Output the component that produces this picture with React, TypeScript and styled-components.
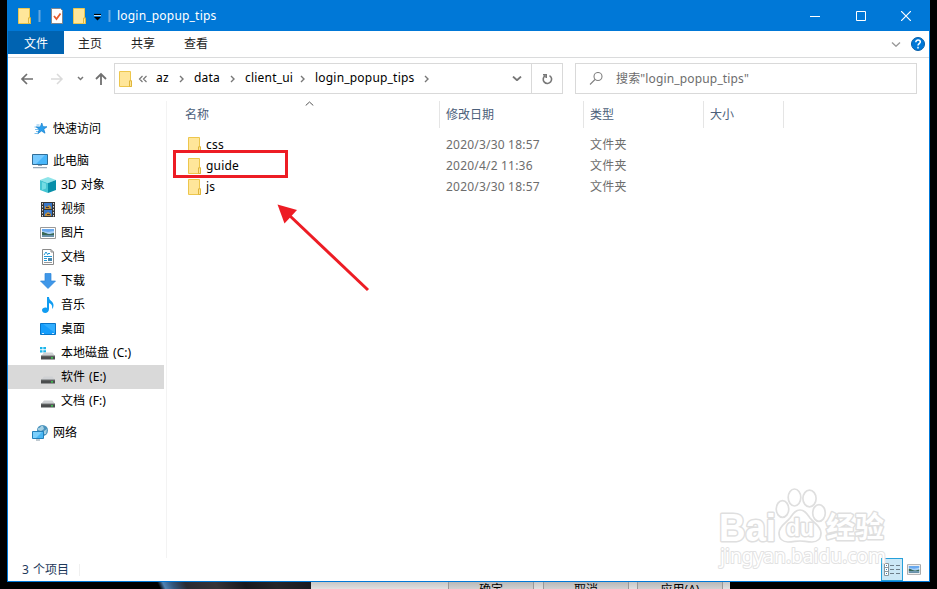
import React from "react";
import styled, { createGlobalStyle } from "styled-components";

const GlobalStyle = createGlobalStyle`
  * { box-sizing: border-box; }
  html, body { margin: 0; padding: 0; background: #000; overflow: hidden; }
  body { font-family: "Noto Sans", "Noto Sans CJK SC", sans-serif; font-size: 12px; line-height: 16px; color: #000; }
  svg { display: block; flex: none; }
`;

const Screen = styled.div`
  position: relative;
  width: 937px;
  height: 589px;
  overflow: hidden;
  display: flex;
  flex-direction: column;
  background: #000;
`;

const Window = styled.main`
  width: 923px;
  height: 582px;
  flex: none;
  margin-left: 7px;
  background: #fff;
  border: 1px solid #0078d7;
  border-top: 0;
  display: flex;
  flex-direction: column;
`;

const TitleBar = styled.header`
  height: 31px;
  background: #0078d7;
  color: #fff;
  display: flex;
  align-items: center;
`;

const QuickTools = styled.div`
  width: 109px;
  display: flex;
  align-items: center;
  padding-left: 10px;
`;

const Title = styled.h1`
  margin: 0;
  font-size: 12px;
  font-weight: 400;
  letter-spacing: 0.2px;
  flex: 1;
`;

const WindowButton = styled.button`
  width: 45.5px;
  height: 30px;
  border: 0;
  padding: 0;
  background: transparent;
  display: flex;
  align-items: center;
  justify-content: center;
`;

const WindowButtons = styled.div`
  display: flex;
`;

const Ribbon = styled.nav`
  height: 27px;
  border-bottom: 1px solid #dadbdc;
  display: flex;
  align-items: flex-start;
`;

const RibbonTab = styled.a<{ $file?: boolean }>`
  width: ${(p) => (p.$file ? 56 : 53)}px;
  height: 23px;
  line-height: 25px;
  text-align: center;
  background: ${(p) => (p.$file ? "#0063b1" : "transparent")};
  color: ${(p) => (p.$file ? "#fff" : "#222")};
  padding-right: ${(p) => (p.$file ? 0 : 1)}px;
`;

const RibbonEnd = styled.div`
  margin-left: auto;
  height: 26px;
  display: flex;
  align-items: center;
  gap: 10px;
  padding-right: 4px;
`;

const AddressRow = styled.div`
  height: 43px;
  padding-top: 5px;
  display: flex;
`;

const NavButtons = styled.div`
  width: 106px;
  height: 31px;
  padding-left: 12px;
`;

const AddressBox = styled.div`
  width: 449px;
  height: 31px;
  border: 1px solid #d9d9d9;
  display: flex;
  align-items: center;
  padding-left: 4px;
`;

const Crumb = styled.span<{ $width: number }>`
  width: ${(p) => p.$width}px;
  padding-bottom: 1px;
  letter-spacing: 0.2px;
  white-space: nowrap;
`;

const ChevronSlot = styled.span<{ $width: number }>`
  width: ${(p) => p.$width}px;
`;

const AddressEnd = styled.div`
  margin-left: auto;
  height: 29px;
  display: flex;
  align-items: center;
`;

const Refresh = styled.div`
  width: 31px;
  height: 29px;
  margin-left: 9px;
  border-left: 1px solid #d9d9d9;
  display: flex;
  align-items: center;
  justify-content: center;
`;

const SearchBox = styled.div`
  width: 342px;
  height: 31px;
  margin-left: 12px;
  border: 1px solid #d9d9d9;
  padding-left: 13px;
  display: flex;
  align-items: center;
  gap: 13px;
  color: #6d6d6d;
  letter-spacing: 0.15px;
`;

const Body = styled.div`
  height: 457px;
  display: flex;
`;

const Sidebar = styled.aside`
  width: 159px;
  padding: 16px 2px 0 0;
  border-right: 1px solid #f3f3f3;
`;

const TreeItem = styled.div<{ $child?: boolean; $selected?: boolean; $gap?: boolean }>`
  height: 24px;
  margin-top: ${(p) => (p.$gap ? 8 : 0)}px;
  padding-left: ${(p) => (p.$child ? 32 : 24)}px;
  display: flex;
  align-items: center;
  gap: 5px;
  white-space: nowrap;
  word-spacing: 1px;
  background: ${(p) => (p.$selected ? "#d9d9d9" : "transparent")};
`;

const Files = styled.section`
  flex: 1;
  min-width: 0;
`;

const SortMark = styled.div`
  height: 0;
  padding-left: 138px;
`;

const HeaderRow = styled.div`
  display: grid;
  grid-template-columns: 273px 144px 120px 80px;
  height: 27px;
  color: #4c607a;
`;

const HeaderCell = styled.div<{ $first?: boolean }>`
  padding-left: ${(p) => (p.$first ? 18 : 6)}px;
  border-right: 1px solid #e5e5e5;
  line-height: 27px;
`;

const FileRow = styled.div`
  display: grid;
  grid-template-columns: 273px 144px 120px;
  height: 21px;
  line-height: 21px;
  color: #6d6d6d;
`;

const FileList = styled.div`
  padding-top: 6px;
`;

const FileName = styled.div`
  display: flex;
  align-items: center;
  gap: 4px;
  padding-left: 21px;
  color: #000;
  letter-spacing: 0.2px;
`;

const FileCell = styled.div`
  padding-left: 6px;
  letter-spacing: 0.2px;
`;

const StatusBar = styled.footer`
  flex: 1;
  display: flex;
  align-items: center;
  padding-left: 14px;
  color: #1e395b;
`;

const StatusText = styled.span`
  width: 58px;
  height: 12px;
  line-height: 12px;
  word-spacing: 1px;
  border-right: 1px solid #f0f0f0;
`;

const ViewButtons = styled.div`
  margin-left: auto;
  display: flex;
  align-items: center;
  padding-right: 4px;
`;

const ViewButton = styled.div<{ $active?: boolean }>`
  width: 22px;
  height: 23px;
  border: ${(p) => (p.$active ? "1px solid #26a0da" : "0")};
  background: ${(p) => (p.$active ? "#cce8f6" : "transparent")};
  display: flex;
  align-items: center;
  justify-content: center;
`;

const Backdrop = styled.div`
  height: 7px;
  display: flex;
`;

const Wallpaper = styled.div`
  width: 154px;
  margin-left: 157px;
  background: linear-gradient(65deg, #000 0, #000 3px, #4f83b4 8px, #32567c 16px, #292b33 28px, #353338 55px, #18181e 82px, #25252a 110px, #15151c 154px);
`;

const Dialog = styled.div`
  width: 419px;
  display: flex;
  padding-left: 137px;
  overflow: hidden;
  background: linear-gradient(#c6c6c6, #e0e0e0);
`;

const DialogButton = styled.div<{ $gap: number }>`
  width: 86px;
  height: 24px;
  margin-right: ${(p) => p.$gap}px;
  flex: none;
  border: 1px solid #989898;
  border-top: 0;
  background: linear-gradient(#b8b8b8, #d0d0d0 7px);
  text-align: center;
  line-height: 15px;
`;

const HighlightBox = styled.div`
  position: absolute;
  left: 173px;
  top: 150px;
  width: 115px;
  height: 28px;
  border: 3px solid #ed1c24;
`;

const Overlay = styled.svg`
  position: absolute;
  left: 0;
  top: 0;
  pointer-events: none;
`;

const Folder = () => (
  <svg width="14" height="16" viewBox="0 0 14 16">
    <path d="M.5.5h11v9.500h1v5.500H.5z" fill="#ffe69a" stroke="#edc64c" />
    <path d="M10.500 15.500V9.800h2v5.700z" fill="#ffe595" stroke="#dfb63c" />
  </svg>
);

const Chevron = ({ down, size = 5, color = "#777", w = 1.4 }: { down?: boolean; size?: number; color?: string; w?: number }) => (
  <svg width={down ? size * 2 : size} height={down ? size : size * 1.6} viewBox={down ? "0 0 10 5" : "0 0 5 8"} fill="none" stroke={color} strokeWidth={w}>
    <path d={down ? "M1 .6 5 4.200 9 .6" : "M1 1 4 4 1 7"} />
  </svg>
);

const Picture = ({ w = 16, h = 12 }: { w?: number; h?: number }) => (
  <svg width={w} height={h} viewBox="0 0 16 12">
    <path d="M.5.5h15v11H.5z" fill="#fff" stroke="#999" />
    <path d="M2 2h12v8H2z" fill="#a9d0f7" />
    <path d="M2 2h12v2L8 5 2 4z" fill="#6aa9ee" />
    <path d="M2 5c3 0 4 2 8 2l4-1v2H2z" fill="#396856" />
    <path d="M2 8h12v2H2z" fill="#6790a8" />
  </svg>
);

const Drive = ({ win }: { win?: boolean }) => (
  <svg width="16" height="16" viewBox="0 0 16 16">
    {win && <path d="M0 2h2.500v2.300H0zM3.300 2H6v2.300H3.300zM0 5.200h2.500v2.300H0zM3.300 5.200H6v2.300H3.300z" fill="#1bb5ea" />}
    <path d="m4 7.500h8.500l2 3h-13z" fill="#cfd1d4" />
    <path d="M1 11h14v3.500H1z" fill="#4b4d4e" />
    <path d="M1 10.300h14v1H1z" fill="#85888a" />
    <path d="M11 12.300h2v1.300h-2z" fill="#3cdf50" />
  </svg>
);

type IconName = "star" | "pc" | "cube" | "film" | "picture" | "doc" | "down" | "music" | "desktop" | "driveWin" | "drive" | "network";

const TreeIcon = ({ name }: { name: IconName }) => {
  if (name === "driveWin") return <Drive win />;
  if (name === "drive") return <Drive />;
  if (name === "picture") return <Picture />;
  return (
    <svg width="16" height="16" viewBox="0 0 16 16">
      {name === "star" && (
        <>
          <path d="M4.500 4h3M2.500 6h3M3 8.500h4M4 10.500h3M2.500 12.500h3" stroke="#7cc0ee" />
          <path d="m9.800 2 1.200 3.700 4 .1-3.200 2.400 1.200 4-3.500-2.200-3.700 2.700 1.500-4.300-3-2.400 4-.1z" fill="#2ba0ee" stroke="#1580cd" strokeWidth=".7" />
        </>
      )}
      {name === "pc" && (
        <>
          <path d="M.5 1.500h15v10H.5z" fill="#48b6fa" stroke="#316e98" />
          <path d="M1 2h12L4 11H1z" fill="#77caff" />
          <path d="M6 12h4v1H6zM1 14h14v1.300H1z" fill="#9aa9b7" />
        </>
      )}
      {name === "cube" && (
        <>
          <path d="m8 0 8 3-8 3-8-3z" fill="#8ee4e9" />
          <path d="m0 3 8 3v10l-8-3z" fill="#45c5d2" />
          <path d="m8 6 8-3v10l-8 3z" fill="#078fa9" />
          <path d="m2 5 4 1.500v5L2 13z" fill="#73dce3" />
        </>
      )}
      {name === "film" && (
        <>
          <path d="M1 1h14v15H1z" fill="#363636" />
          <path d="M4 2h8v6H4zM4 9h8v6H4z" fill="#3777c9" />
          <path d="m5 5 2 1 2-2 2 2v2H5zM5 13l3-2 3 2v2H5z" fill="#c1903c" />
          <path d="M6 6h3v1H6zM7 13h3v1H7z" fill="#4b352d" />
          <path d="M2.500 2v14M13.500 2v14" stroke="#ddd" strokeDasharray="1.500 1.500" />
        </>
      )}
      {name === "doc" && (
        <>
          <path d="M2.500.5H11l2.500 2.500v12.500h-11z" fill="#fff" stroke="#8b8b8b" />
          <path d="M11 .5V3h2.500" fill="none" stroke="#8b8b8b" />
          <path d="m4 6 2-3 2 3M8 4.500h2M4 7.500h8M4 9.500h3M4 11.500h3" stroke="#2498d5" fill="none" />
          <path d="M4 13.500h8" stroke="#999" />
          <path d="M8 9h4v3H8z" fill="#4689b1" />
        </>
      )}
      {name === "down" && <path d="M5 .5h6V8h4.500L8 15.500.5 8H5z" fill="#3f97e8" stroke="#2985d8" strokeWidth=".7" />}
      {name === "music" && <path d="M7 0h2c0 4 4.500 4 4.500 8 0 2-.5 3-1.500 4 .5-3 0-5-3-6v6c0 5-7 5-7 1 0-2 3-3 5-2z" fill="#109cf1" />}
      {name === "desktop" && (
        <>
          <path d="M.5 2.500h15v11H.5z" fill="#159dfb" stroke="#0875c8" />
          <path d="M3 3h12v9z" fill="#32aefe" />
          <path d="M2 12.500h2M12 12.500h2" stroke="#cde7fa" />
        </>
      )}
      {name === "network" && (
        <>
          <circle cx="10.500" cy="5.500" r="5.500" fill="#4a93bd" />
          <path d="M6 3c2 1 3-3 5-2l1 3-3 2-3-1zM12 6l3-2-1 5-2 0z" fill="#a5cfe2" />
          <path d="M.5 6.500h11v7H.5z" fill="#49b7f4" stroke="#2480b9" />
          <path d="M1 7h9l-6 6H1z" fill="#7ccffb" />
          <path d="M4 14.500h4v1H4z" fill="#8095a2" />
        </>
      )}
    </svg>
  );
};

const tree: { icon: IconName; label: string; child?: boolean; gap?: boolean; selected?: boolean }[] = [
  { icon: "star", label: "快速访问" },
  { icon: "pc", label: "此电脑", gap: true },
  { icon: "cube", label: "3D 对象", child: true },
  { icon: "film", label: "视频", child: true },
  { icon: "picture", label: "图片", child: true },
  { icon: "doc", label: "文档", child: true },
  { icon: "down", label: "下载", child: true },
  { icon: "music", label: "音乐", child: true },
  { icon: "desktop", label: "桌面", child: true },
  { icon: "driveWin", label: "本地磁盘 (C:)", child: true },
  { icon: "drive", label: "软件 (E:)", child: true, selected: true },
  { icon: "drive", label: "文档 (F:)", child: true },
  { icon: "network", label: "网络", gap: true },
];

const files = [
  { name: "css", date: "2020/3/30 18:57" },
  { name: "guide", date: "2020/4/2 11:36" },
  { name: "js", date: "2020/3/30 18:57" },
];

const Watermark = () => (
  <g fill="#fff" stroke="#dfdfdf" strokeWidth="3" strokeLinejoin="round" fontFamily='"Liberation Sans", "Noto Sans CJK SC", sans-serif' paintOrder="stroke">
    <text x="719" y="541" fontSize="38" fontWeight="700" textLength="57" lengthAdjust="spacingAndGlyphs">Bai</text>
    <g strokeWidth="1.700" fill="none">
      <ellipse cx="782.500" cy="509" rx="6.300" ry="8.300" />
      <ellipse cx="794.500" cy="497.500" rx="6.300" ry="8.500" />
      <ellipse cx="809.500" cy="498.500" rx="6.600" ry="8.300" />
      <ellipse cx="819" cy="513" rx="6.300" ry="8.300" />
      <path d="M800 510c5 0 7 4 10 8 4 5 11 8 11 15 0 6-4 9-9 9-5 0-8-1-12-1s-7 1-12 1c-5 0-9-3-9-9 0-7 7-10 11-15 3-4 5-8 10-8z" />
    </g>
    <text x="786" y="536" fontSize="23" fontWeight="700" textLength="28" lengthAdjust="spacingAndGlyphs">du</text>
    <text x="826" y="538" fontSize="29" fontWeight="700" textLength="58" lengthAdjust="spacingAndGlyphs">经验</text>
    <text x="720" y="563" fontSize="20" fontWeight="400" fontFamily='"Noto Sans", sans-serif' textLength="166" lengthAdjust="spacingAndGlyphs" strokeWidth="2" stroke="#e2e2e2">jingyan.baidu.com</text>
  </g>
);

export default function App() {
  return (
    <Screen>
      <GlobalStyle />
      <Window>
        <TitleBar>
          <QuickTools>
            <Folder />
            <svg width="85" height="20" viewBox="0 0 85 20">
              <path d="M7.500 4v12" stroke="#68a9df" strokeWidth="2" />
              <path d="M19.500 2.500h9l2 2v13h-11z" fill="#fff" stroke="#82868c" />
              <path d="m22 10 2.500 3 4-5.500" fill="none" stroke="#e75b2c" strokeWidth="1.800" />
              <path d="M41.500 2.500h11v9.500h1v5.500h-12z" fill="#ffe69a" stroke="#edc64c" />
              <path d="M51.500 17v-5h2v5.500" fill="#ffe595" stroke="#dfb63c" />
              <path d="M62 8.500h7" stroke="#000" strokeWidth="1.200" />
              <path d="M62 9.500h7" stroke="#fff" strokeWidth=".8" />
              <path d="m62 11 3.500 3.500L69 11z" />
              <path d="M77.500 4v12" stroke="#68a9df" strokeWidth="2" />
            </svg>
          </QuickTools>
          <Title>login_popup_tips</Title>
          <WindowButtons>
            <WindowButton aria-label="最小化"><svg width="10" height="10"><path d="M0 5.500h10" stroke="#fff" /></svg></WindowButton>
            <WindowButton aria-label="最大化"><svg width="10" height="10"><path d="M.5.5h9v9h-9z" fill="none" stroke="#fff" /></svg></WindowButton>
            <WindowButton aria-label="关闭"><svg width="10" height="10"><path d="m0 0 10 10M10 0 0 10" stroke="#fff" strokeWidth="1.200" /></svg></WindowButton>
          </WindowButtons>
        </TitleBar>
        <Ribbon>
          <RibbonTab $file>文件</RibbonTab>
          <RibbonTab>主页</RibbonTab>
          <RibbonTab>共享</RibbonTab>
          <RibbonTab>查看</RibbonTab>
          <RibbonEnd>
            <Chevron down color="#999" size={5} />
            <svg width="14" height="14" viewBox="0 0 14 14">
              <circle cx="7" cy="7" r="6.500" fill="#0078d7" stroke="#075ca6" />
              <path d="M4.800 5.200c0-3 4.500-2.700 4.500-.2C9.300 6.500 7 6.800 7 8.500M7 9.800v1.600" fill="none" stroke="#fff" strokeWidth="1.500" />
            </svg>
          </RibbonEnd>
        </Ribbon>
        <AddressRow>
          <NavButtons>
            <svg width="90" height="31" viewBox="0 0 90 31" fill="none">
              <path d="M13 16H2m5-5-5 5 5 5" stroke="#707070" strokeWidth="1.700" />
              <path d="M31 16h11m-5-5 5 5-5 5" stroke="#dadada" strokeWidth="1.500" />
              <path d="m58 14 2.500 2.500L63 14" stroke="#777" strokeWidth="1.500" />
              <path d="M81 22V11m-5 5 5-5 5 5" stroke="#707070" strokeWidth="1.800" />
            </svg>
          </NavButtons>
          <AddressBox>
            <Folder />
            <ChevronSlot $width={23}>
              <svg width="18" height="8" viewBox="0 0 18 8" fill="none" stroke="#777" strokeWidth="1.200"><path d="M9.500 1 6.500 4l3 3M13.500 1l-3 3 3 3" /></svg>
            </ChevronSlot>
            <Crumb $width={23}>az</Crumb>
            <ChevronSlot $width={15}><Chevron /></ChevronSlot>
            <Crumb $width={36}>data</Crumb>
            <ChevronSlot $width={15}><Chevron /></ChevronSlot>
            <Crumb $width={55}>client_ui</Crumb>
            <ChevronSlot $width={15}><Chevron /></ChevronSlot>
            <Crumb $width={109}>login_popup_tips</Crumb>
            <Chevron />
            <AddressEnd>
              <Chevron down color="#777" w={1.9} />
              <Refresh>
                <svg width="12" height="12" viewBox="0 0 12 12" fill="none" stroke="#777" strokeWidth="1.600">
                  <path d="M4 2.800a4.200 4.200 0 1 0 4.500-.2M2 1.800h3.200V5" />
                </svg>
              </Refresh>
            </AddressEnd>
          </AddressBox>
          <SearchBox>
            <svg width="14" height="14" viewBox="0 0 14 14" fill="none" stroke="#808080" strokeWidth="1.100">
              <circle cx="9" cy="4.500" r="4" /><path d="M6 7.500 1 12.500" />
            </svg>
            <span>搜索"login_popup_tips"</span>
          </SearchBox>
        </AddressRow>
        <Body>
          <Sidebar>
            {tree.map((item) => (
              <TreeItem key={item.label} $child={item.child} $gap={item.gap} $selected={item.selected}>
                <TreeIcon name={item.icon} />
                <span>{item.label}</span>
              </TreeItem>
            ))}
          </Sidebar>
          <Files>
            <SortMark>
              <svg width="9" height="5" viewBox="0 0 9 5" fill="none" stroke="#555"><path d="M.7 4.500 4.500 1l3.800 3.500" /></svg>
            </SortMark>
            <HeaderRow>
              <HeaderCell $first>名称</HeaderCell>
              <HeaderCell>修改日期</HeaderCell>
              <HeaderCell>类型</HeaderCell>
              <HeaderCell>大小</HeaderCell>
            </HeaderRow>
            <FileList>
              {files.map((file) => (
                <FileRow key={file.name}>
                  <FileName><Folder /><span>{file.name}</span></FileName>
                  <FileCell>{file.date}</FileCell>
                  <FileCell>文件夹</FileCell>
                </FileRow>
              ))}
            </FileList>
          </Files>
        </Body>
        <StatusBar>
          <StatusText>3 个项目</StatusText>
          <ViewButtons>
            <ViewButton $active>
              <svg width="17" height="15" viewBox="0 0 17 15" fill="none" stroke="#6d7e89">
                <path d="M.5 1.500h4v12h-4zM.5 5.500h4M.5 9.500h4" fill="#fff" stroke="#8b969d" />
                <path d="M6 3.500h4m2 0h4M6 7.500h4m2 0h4M6 11.500h4m2 0h4" />
                <path d="M2 3.500h1M2 7.500h1M2 11.500h1" stroke="#3287bd" />
              </svg>
            </ViewButton>
            <ViewButton><Picture w={14} h={11} /></ViewButton>
          </ViewButtons>
        </StatusBar>
      </Window>
      <Backdrop>
        <Wallpaper />
        <Dialog>
          <DialogButton $gap={9}>确定</DialogButton>
          <DialogButton $gap={8}>取消</DialogButton>
          <DialogButton $gap={0}>应用(A)</DialogButton>
        </Dialog>
      </Backdrop>
      <HighlightBox />
      <Overlay width="937" height="589" viewBox="0 0 937 589">
        <path d="m289 215 79 75" stroke="#ed1c24" strokeWidth="3" />
        <path d="m277.500 204.500 19.500 5.500-12.500 13.500z" fill="#ed1c24" />
        <Watermark />
      </Overlay>
    </Screen>
  );
}
